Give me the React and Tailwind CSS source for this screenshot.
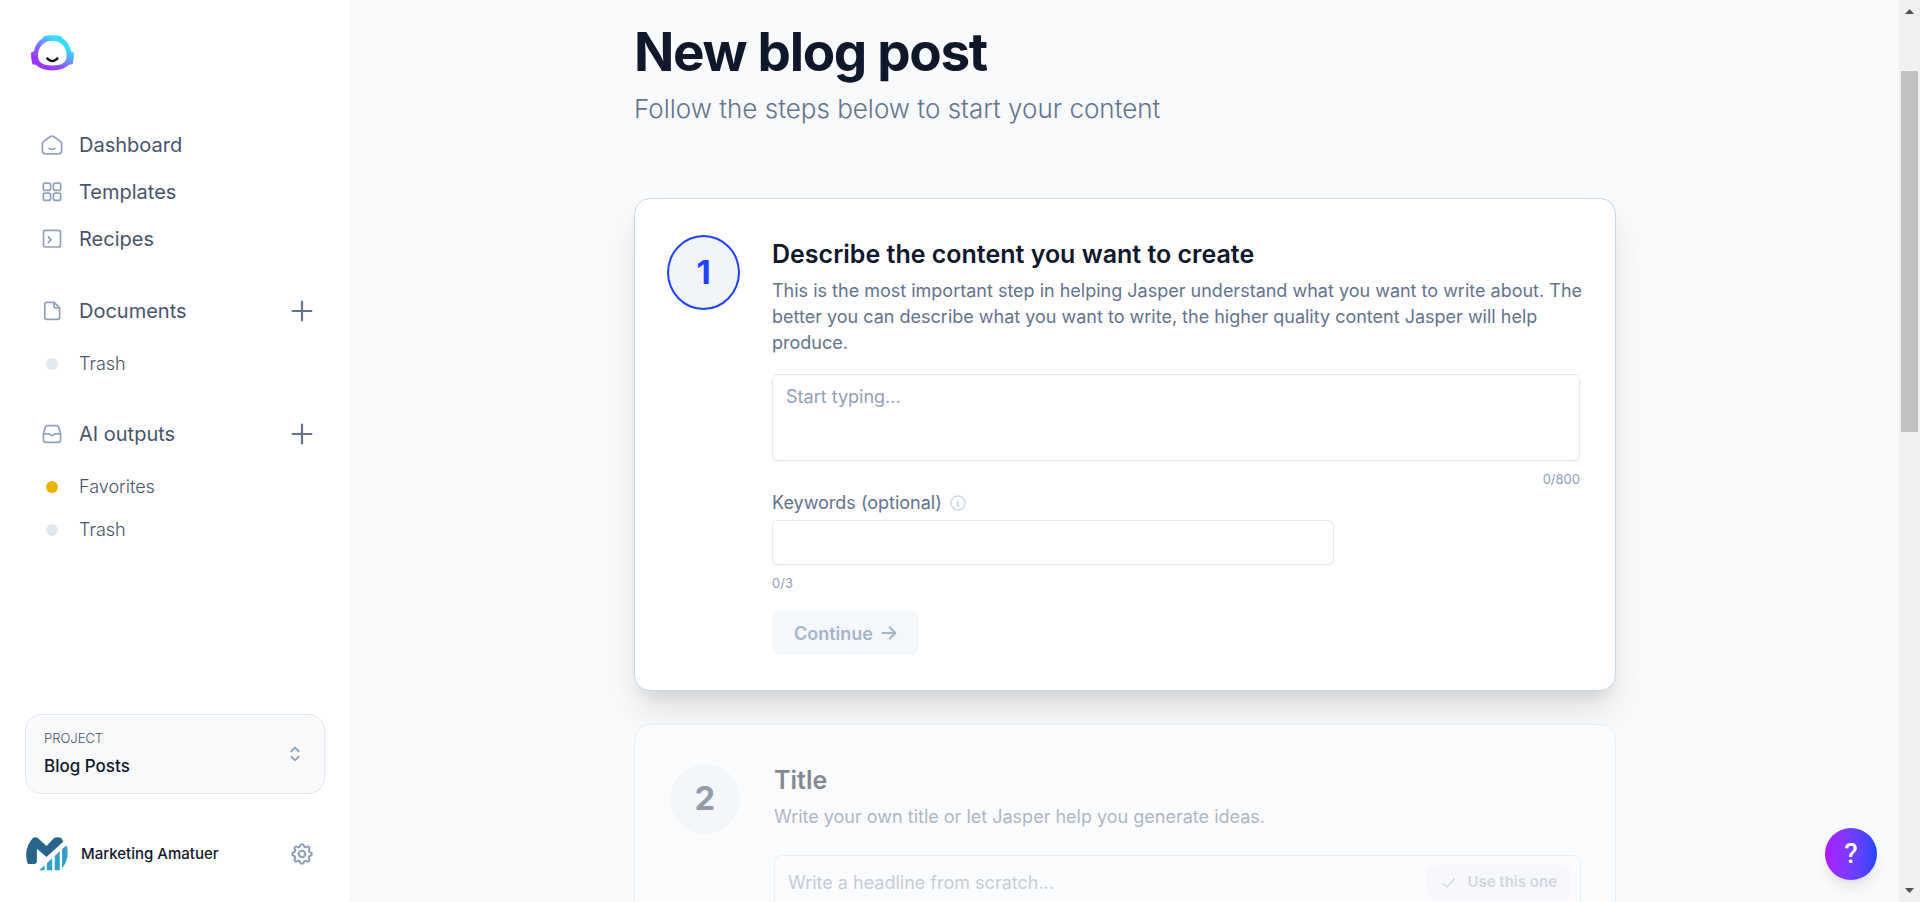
import { useState } from 'react';
import { HiOutlineCog, HiOutlineSelector } from 'react-icons/hi';

const JasperLogo = () => (
  <svg viewBox="93 104 129 107" className="w-[43px] h-9" aria-hidden="true">
    <defs>
      <linearGradient id="helmet" x1="0.2" y1="0.85" x2="0.8" y2="0.15">
        <stop offset="0.1" stopColor="#9b37fb" />
        <stop offset="0.5" stopColor="#7a7bff" />
        <stop offset="0.85" stopColor="#34dcff" />
      </linearGradient>
    </defs>
    <path
      fill="url(#helmet)"
      fillRule="evenodd"
      d="M132 107Q157 102 183 107L187 113Q208 126 213 152L222 157Q222 175 218 191L207 193Q190 210 157 210Q124 210 107 193L97 191Q93 175 93 157L102 152Q107 126 128 113ZM157 121C129 121 114 142 114 166C114 188 129 195 157 195C185 195 200 188 200 166C200 142 185 121 157 121Z"
    />
    <path d="M140 172Q157 192 174 172" fill="none" stroke="#0b1020" strokeWidth="7" />
  </svg>
);

const AccountLogo = () => (
  <svg viewBox="78 411 127 102" className="w-[42px] h-[34px]" aria-hidden="true">
    <path
      fill="#29658a"
      d="M84 492C74 470 77 438 98 414Q105 409 113 413L140 438L162 414Q174 409 184 413L191 424L140 471L111 446V485Q111 492 104 492Z"
    />
    <path
      fill="#309fcb"
      d="M118 511L134 497V511ZM141 490L157 475V511H141ZM165 468L180 453V511H165ZM187 447L201 436C207 458 205 484 187 505Z"
    />
  </svg>
);

const Icon = ({ children, className = 'size-6' }) => (
  <svg
    viewBox="0 0 24 24"
    className={`shrink-0 ${className}`}
    fill="none"
    stroke="currentColor"
    strokeWidth="1.7"
    strokeLinecap="round"
    strokeLinejoin="round"
    aria-hidden="true"
  >
    {children}
  </svg>
);

const HomeIcon = () => (
  <Icon>
    <path d="M2.4 11Q2.4 9.2 3.9 8.1L10.4 3.5Q12 2.5 13.6 3.5L20.1 8.1Q21.6 9.2 21.6 11V17.6Q21.6 20.9 18.4 20.9H5.6Q2.4 20.9 2.4 17.6ZM9.2 15.5Q12 17 14.8 15.5" />
  </Icon>
);

const GridIcon = () => (
  <Icon>
    <rect x="3.3" y="3.2" width="7.3" height="7.2" rx="2" />
    <rect x="13.4" y="3.2" width="7.3" height="7.2" rx="2" />
    <rect x="3.3" y="13.2" width="7.3" height="7.2" rx="2" />
    <rect x="13.4" y="13.2" width="7.3" height="7.2" rx="2" />
  </Icon>
);

const RecipeIcon = () => (
  <Icon>
    <rect x="3.5" y="3.4" width="17" height="16.6" rx="2" />
    <path d="M8.4 9.8L11 12.6L8.4 15.4" />
  </Icon>
);

const DocumentIcon = () => (
  <Icon>
    <path d="M4.8 5.4Q4.8 3.4 6.8 3.4H14.2L19.6 8.8V18.2Q19.6 20.4 17.4 20.4H7Q4.8 20.4 4.8 18.2ZM14 3.6V7Q14 9 16 9H19.4" />
  </Icon>
);

const InboxIcon = () => (
  <Icon>
    <path d="M3.4 11.6L5.4 5.2Q5.9 3.6 7.6 3.6H16.4Q18.1 3.6 18.6 5.2L20.6 11.6V18Q20.6 20.4 18.2 20.4H5.8Q3.4 20.4 3.4 18ZM3.4 11.8H8.6Q9.6 11.8 10.1 12.6Q10.8 13.6 12 13.6Q13.2 13.6 13.9 12.6Q14.4 11.8 15.4 11.8H20.6" />
  </Icon>
);

const NavItem = ({ icon, label }) => (
  <a href="#" className="flex items-center gap-[15px] h-[47px] text-[20px] text-slate-600">
    <span className="text-slate-400">{icon}</span>
    {label}
  </a>
);

const SectionHeader = ({ icon, label }) => (
  <div className="flex items-center justify-between h-[47px]">
    <NavItem icon={icon} label={label} />
    <button type="button" aria-label={`New in ${label}`} className="text-slate-500">
      <Icon>
        <path d="M12 2.6V21.4M2.6 12H21.4" strokeWidth="2.2" />
      </Icon>
    </button>
  </div>
);

const SubItem = ({ label, dot = 'bg-slate-200' }) => (
  <a href="#" className="flex items-center gap-[21px] h-[43px] pl-[6px] text-[18px] font-light text-slate-600">
    <span className={`size-3 rounded-full ${dot}`} />
    {label}
  </a>
);

const Sidebar = () => (
  <aside className="flex flex-col w-[351px] shrink-0 bg-white border-r border-slate-100">
    <a href="#" className="block pl-[31px] pt-[35px]" aria-label="Home">
      <JasperLogo />
    </a>

    <nav className="pl-10 pr-9 pt-[50px]">
      <NavItem icon={<HomeIcon />} label="Dashboard" />
      <NavItem icon={<GridIcon />} label="Templates" />
      <NavItem icon={<RecipeIcon />} label="Recipes" />

      <div className="mt-[25px]">
        <SectionHeader icon={<DocumentIcon />} label="Documents" />
        <div className="pt-2">
          <SubItem label="Trash" />
        </div>
      </div>

      <div className="mt-[25px]">
        <SectionHeader icon={<InboxIcon />} label="AI outputs" />
        <div className="pt-2">
          <SubItem label="Favorites" dot="bg-[#eab308]" />
          <SubItem label="Trash" />
        </div>
      </div>
    </nav>

    <div className="mt-auto px-[25px] pb-[31px]">
      <button
        type="button"
        className="flex items-center justify-between w-full h-20 px-[18px] rounded-2xl border border-slate-200 bg-slate-50 text-left"
      >
        <span>
          <span className="block text-[13px] leading-5 font-light text-slate-600">PROJECT</span>
          <span className="block mt-1 text-[17px] leading-7 font-medium text-slate-900">Blog Posts</span>
        </span>
        <HiOutlineSelector className="size-[22px] text-slate-400" />
      </button>

      <div className="flex items-center mt-[43px] pl-px">
        <AccountLogo />
        <span className="ml-[13px] flex-1 text-[15px] font-medium text-slate-900">Marketing Amatuer</span>
        <button type="button" aria-label="Settings" className="mr-[10px] text-slate-400">
          <HiOutlineCog className="size-[26px]" />
        </button>
      </div>
    </div>
  </aside>
);

const DescribeStep = () => {
  const [text, setText] = useState('');
  const [keywords, setKeywords] = useState('');
  const keywordCount = keywords.split(',').filter((k) => k.trim()).length;

  return (
    <section className="flex gap-8 mt-[71px] pl-8 pr-[35px] pt-9 pb-[35px] rounded-2xl border border-slate-300 bg-white shadow-[0_22px_36px_-5px_rgba(0,0,0,0.12),0_10px_14px_-5px_rgba(0,0,0,0.07)]">
      <div className="flex items-center justify-center w-[73px] h-[75px] shrink-0 rounded-[50%] border-2 border-[#1d43ff] bg-slate-100 text-[33px] font-bold text-[#1d43ff]">
        1
      </div>
      <div className="flex-1 min-w-0">
        <h2 className="mt-[3px] text-[25px] leading-8 font-semibold text-slate-900">
          Describe the content you want to create
        </h2>
        <p className="mt-2 -mr-3 text-[18px] leading-[26px] text-slate-500">
          This is the most important step in helping Jasper understand what you want to write about. The
          better you can describe what you want to write, the higher quality content Jasper will help
          produce.
        </p>

        <textarea
          aria-label="Content description"
          placeholder="Start typing..."
          value={text}
          onChange={(e) => setText(e.target.value)}
          className="block mt-[18px] w-full h-[87px] px-[13px] py-[9px] rounded-md border border-slate-200 bg-white text-[18px] leading-[26px] resize-none shadow-xs placeholder:text-slate-400"
        />
        <div className="mt-2 text-right text-[13px] leading-5 text-slate-400">{text.length}/800</div>

        <div className="flex items-center gap-2 mt-px text-slate-500">
          <label htmlFor="keywords" className="text-[18px] leading-[26px]">Keywords (optional)</label>
          <Icon className="size-4 text-slate-300">
            <circle cx="12" cy="12" r="10.6" strokeWidth="2" />
            <path d="M12 7.4V7.6M10.8 11.4H12V16.4M10.8 16.4H13.4" strokeWidth="2.4" />
          </Icon>
        </div>
        <input
          id="keywords"
          type="text"
          value={keywords}
          onChange={(e) => setKeywords(e.target.value)}
          className="block mt-1 w-[562px] max-w-full h-[45px] px-[13px] rounded-md border border-slate-200 bg-white text-[18px] shadow-xs"
        />
        <div className="mt-2 text-[13px] leading-5 text-slate-400">{keywordCount}/3</div>

        <button
          type="button"
          disabled={!text}
          className="flex items-center gap-2 mt-[18px] h-11 px-[22px] rounded-lg bg-slate-100/70 text-[18px] font-semibold text-slate-400/80"
        >
          Continue
          <Icon className="size-4">
            <path d="M2.4 12H21.6M13 3.4L21.6 12L13 20.6" strokeWidth="2.8" />
          </Icon>
        </button>
      </div>
    </section>
  );
};

const TitleStep = () => (
  <section className="flex gap-[34px] mt-[33px] pl-[35px] pr-[34px] pt-[39px] pb-[34px] rounded-2xl border border-slate-200 bg-white opacity-50">
    <div className="flex items-center justify-center size-[70px] shrink-0 rounded-full bg-slate-100 text-[33px] font-bold text-slate-700">
      2
    </div>
    <div className="flex-1 min-w-0">
      <h2 className="text-[25px] leading-8 font-semibold text-slate-900">Title</h2>
      <p className="mt-2 text-[18px] leading-[26px] text-slate-500">
        Write your own title or let Jasper help you generate ideas.
      </p>
      <div className="flex items-center mt-[25px] h-[55px] pr-[9px] rounded-lg border border-slate-200 bg-white">
        <input
          type="text"
          aria-label="Title"
          placeholder="Write a headline from scratch..."
          className="flex-1 min-w-0 pl-[13px] text-[18px] bg-transparent placeholder:text-slate-400"
        />
        <button
          type="button"
          disabled
          className="flex items-center gap-[10px] h-[35px] px-[14px] rounded-lg bg-slate-100/70 text-[15px] font-semibold text-slate-400/80"
        >
          <Icon className="size-4">
            <path d="M4 13.4L9 18.2L20 6" strokeWidth="2" />
          </Icon>
          Use this one
        </button>
      </div>
    </div>
  </section>
);

const ScrollBar = () => (
  <div className="flex flex-col items-center w-[21px] shrink-0 bg-[#f0f0f0] text-[#505050]">
    <svg viewBox="0 0 9 5" className="w-[9px] h-[5px] mt-[9px]" fill="currentColor" aria-hidden="true">
      <path d="M0 5L4.5 0L9 5Z" />
    </svg>
    <div className="mt-[57px] w-[17px] h-[361px] bg-[#c1c1c1]" />
    <svg viewBox="0 0 9 5" className="w-[9px] h-[5px] mt-auto mb-[9px]" fill="currentColor" aria-hidden="true">
      <path d="M0 0H9L4.5 5Z" />
    </svg>
  </div>
);

const App = () => (
  <div className="flex h-screen overflow-hidden bg-slate-50 font-['Inter',sans-serif]">
    <Sidebar />

    <main className="flex-1 min-w-0 overflow-hidden">
      <div className="max-w-[982px] mx-auto pt-[26px]">
        <h1 className="text-[53px] leading-[53px] font-bold tracking-tight text-slate-900">New blog post</h1>
        <p className="mt-3 text-[26px] leading-9 font-light text-slate-500">
          Follow the steps below to start your content
        </p>
        <DescribeStep />
        <TitleStep />
      </div>
    </main>

    <ScrollBar />

    <button
      type="button"
      aria-label="Help"
      className="fixed right-[43px] bottom-[22px] size-[52px] rounded-full bg-linear-to-r from-[#b014ff] to-[#1a45ff] font-['Roboto',sans-serif] text-[28px] font-medium text-white shadow-lg"
    >
      ?
    </button>
  </div>
);

export default App;
